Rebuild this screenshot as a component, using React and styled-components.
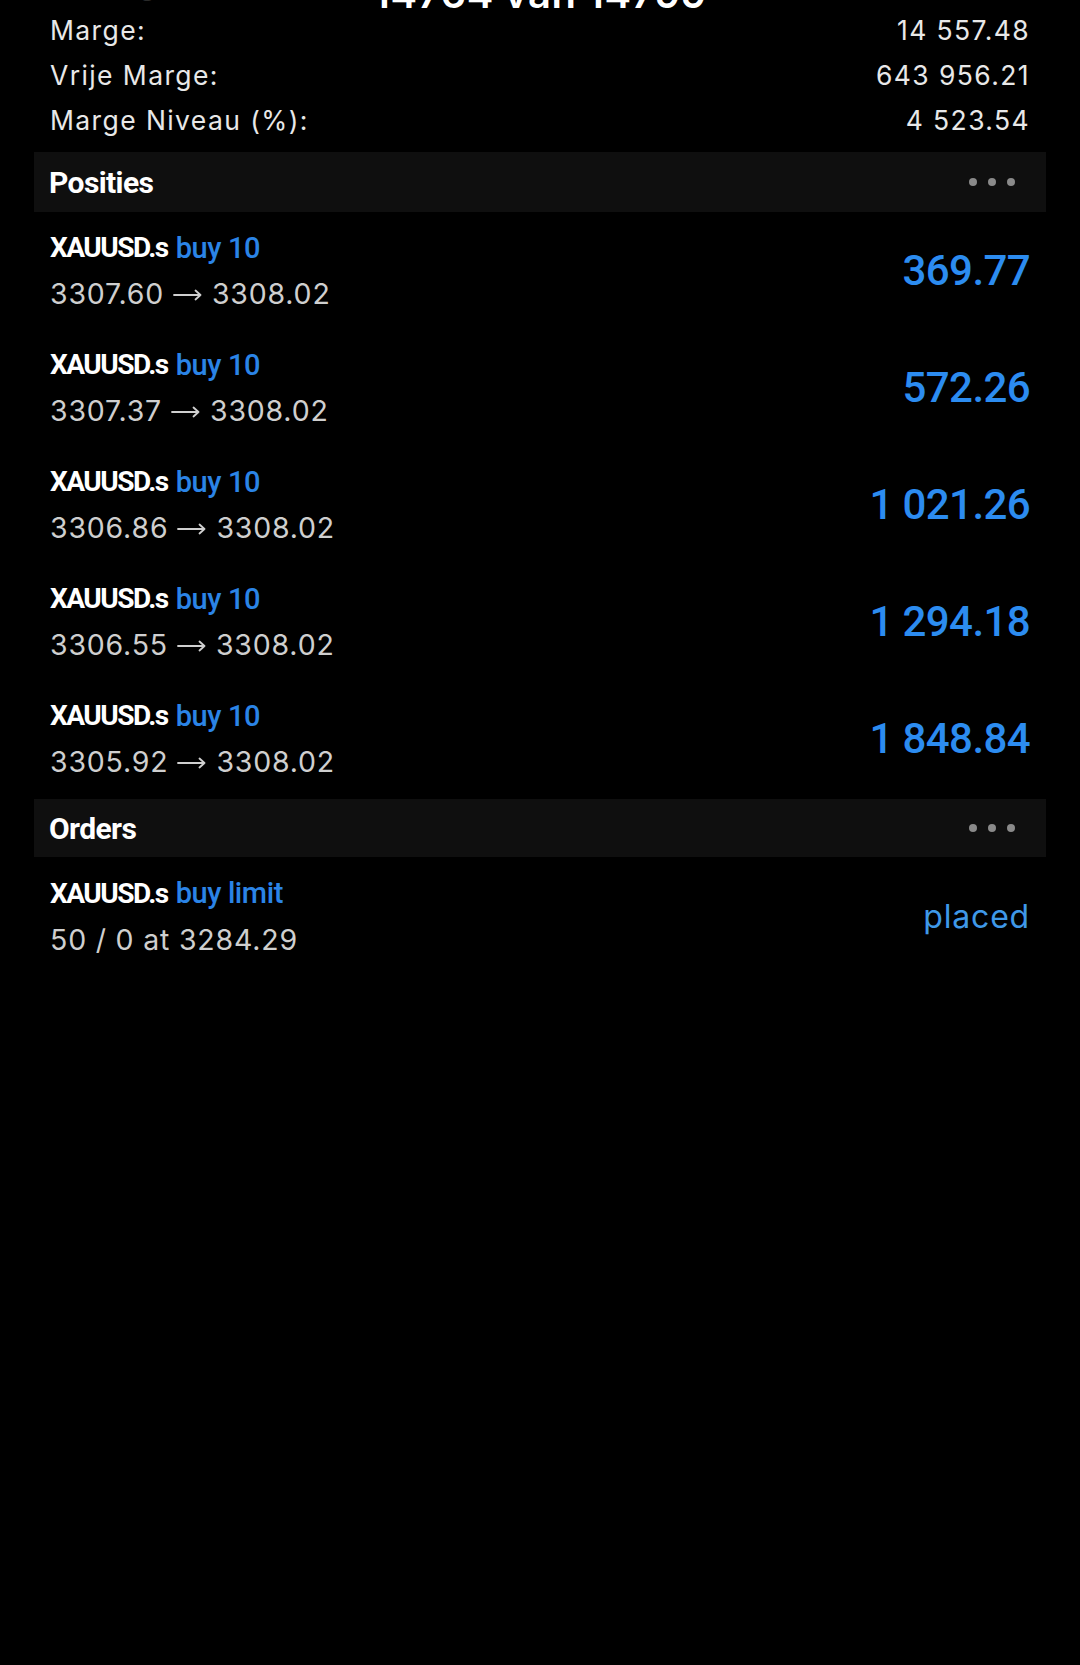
import React from "react";
import styled, { createGlobalStyle } from "styled-components";

const Global = createGlobalStyle`
  html, body { margin: 0; padding: 0; background: #000; }
  #root { background: #000; }
`;

const Screen = styled.div`
  position: relative;
  width: 1080px;
  height: 1665px;
  overflow: hidden;
  background: #000;
  font-family: Inter, "Noto Sans", sans-serif;
  color: #e6e6e6;
`;

const NavTitle = styled.div`
  position: absolute;
  top: -26px;
  left: 0;
  right: 0;
  text-align: center;
  font-family: Inter, sans-serif;
  font-weight: 600;
  font-size: 40px;
  line-height: 40px;
  color: #fff;
  letter-spacing: 0.5px;
`;

const Summary = styled.div`
  display: flex;
  flex-direction: column;
  margin-top: -38px;
  padding: 0 50px;
`;

const SummaryRow = styled.div`
  height: 45px;
  display: flex;
  align-items: center;
  justify-content: space-between;
  font-size: 26.5px;
  letter-spacing: 1.4px;
  color: #e8e8e8;
  opacity: ${(p) => (p.$dim ? 0.18 : 1)};
`;

const SectionBand = styled.div`
  height: ${(p) => p.$h || 60}px;
  margin: ${(p) => p.$mt || 10}px 34px 0;
  padding: 0 31px 0 15px;
  background: #0f0f0f;
  display: flex;
  align-items: center;
  justify-content: space-between;
`;

const SectionTitle = styled.div`
  font-family: Roboto, sans-serif;
  font-weight: 700;
  font-size: 30px;
  letter-spacing: -0.6px;
  color: #fff;
`;

const Dots = styled.div`
  display: flex;
  gap: 11px;
`;

const Dot = styled.span`
  width: 8px;
  height: 8px;
  border-radius: 50%;
  background: #8a8a8a;
`;

const ItemRow = styled.div`
  height: ${(p) => p.$h || 117}px;
  padding: 0 50px;
  display: flex;
  align-items: center;
  justify-content: space-between;
`;

const ItemInfo = styled.div`
  display: flex;
  flex-direction: column;
`;

const NameLine = styled.div`
  height: 46px;
  display: flex;
  align-items: center;
  font-family: Roboto, sans-serif;
  font-size: 28px;
  white-space: pre;
`;

const Symbol = styled.span`
  font-weight: 700;
  letter-spacing: -1.5px;
  color: #fff;
`;

const Side = styled.span`
  margin-left: 8px;
  font-size: 29px;
  font-weight: 500;
  letter-spacing: -0.4px;
  color: #2b84e6;
`;

const DetailLine = styled.div`
  height: 46px;
  display: flex;
  align-items: center;
  font-size: 28.5px;
  color: #cfcfcf;
  letter-spacing: 0.8px;
`;

const ArrowSvg = styled.svg`
  width: 29px;
  height: 12px;
  margin: 2px 10px 0 9px;
  flex: none;
`;

const Profit = styled.div`
  font-family: Roboto, sans-serif;
  font-weight: 500;
  font-size: 42px;
  letter-spacing: -0.6px;
  color: #2c8cf0;
`;

const Status = styled.div`
  font-size: 32px;
  color: #3f98e8;
  letter-spacing: 0.8px;
`;

const summary = [
  { label: "Vermogen:", value: "658 513.69", dim: true },
  { label: "Marge:", value: "14 557.48" },
  { label: "Vrije Marge:", value: "643 956.21" },
  { label: "Marge Niveau (%):", value: "4 523.54" },
];

const positions = [
  { open: "3307.60", cur: "3308.02", profit: "369.77" },
  { open: "3307.37", cur: "3308.02", profit: "572.26" },
  { open: "3306.86", cur: "3308.02", profit: "1 021.26" },
  { open: "3306.55", cur: "3308.02", profit: "1 294.18" },
  { open: "3305.92", cur: "3308.02", profit: "1 848.84" },
];

function MoreDots() {
  return (
    <Dots>
      <Dot />
      <Dot />
      <Dot />
    </Dots>
  );
}

function Arrow() {
  return (
    <ArrowSvg viewBox="0 0 29 12" aria-label="→">
      <path
        d="M1 6 H27.5 M22.5 1.5 L27.5 6 L22.5 10.5"
        fill="none"
        stroke="#cfcfcf"
        strokeWidth="1.8"
        strokeLinecap="round"
        strokeLinejoin="round"
      />
    </ArrowSvg>
  );
}

export default function App() {
  return (
    <>
      <Global />
      <Screen>
        <Summary>
          {summary.map((s) => (
            <SummaryRow key={s.label} $dim={s.dim}>
              <span>{s.label}</span>
              <span>{s.value}</span>
            </SummaryRow>
          ))}
        </Summary>

        <SectionBand $mt={10} $h={60}>
          <SectionTitle>Posities</SectionTitle>
          <MoreDots />
        </SectionBand>

        {positions.map((p, i) => (
          <ItemRow key={i}>
            <ItemInfo>
              <NameLine>
                <Symbol>XAUUSD.s</Symbol>
                <Side>buy 10</Side>
              </NameLine>
              <DetailLine>
                <span>{p.open}</span>
                <Arrow />
                <span>{p.cur}</span>
              </DetailLine>
            </ItemInfo>
            <Profit>{p.profit}</Profit>
          </ItemRow>
        ))}

        <SectionBand $mt={2} $h={58}>
          <SectionTitle>Orders</SectionTitle>
          <MoreDots />
        </SectionBand>

        <ItemRow $h={118}>
          <ItemInfo>
            <NameLine>
              <Symbol>XAUUSD.s</Symbol>
              <Side>buy limit</Side>
            </NameLine>
            <DetailLine>50 / 0 at 3284.29</DetailLine>
          </ItemInfo>
          <Status>placed</Status>
        </ItemRow>

        <NavTitle>14764 van 14799</NavTitle>
      </Screen>
    </>
  );
}
